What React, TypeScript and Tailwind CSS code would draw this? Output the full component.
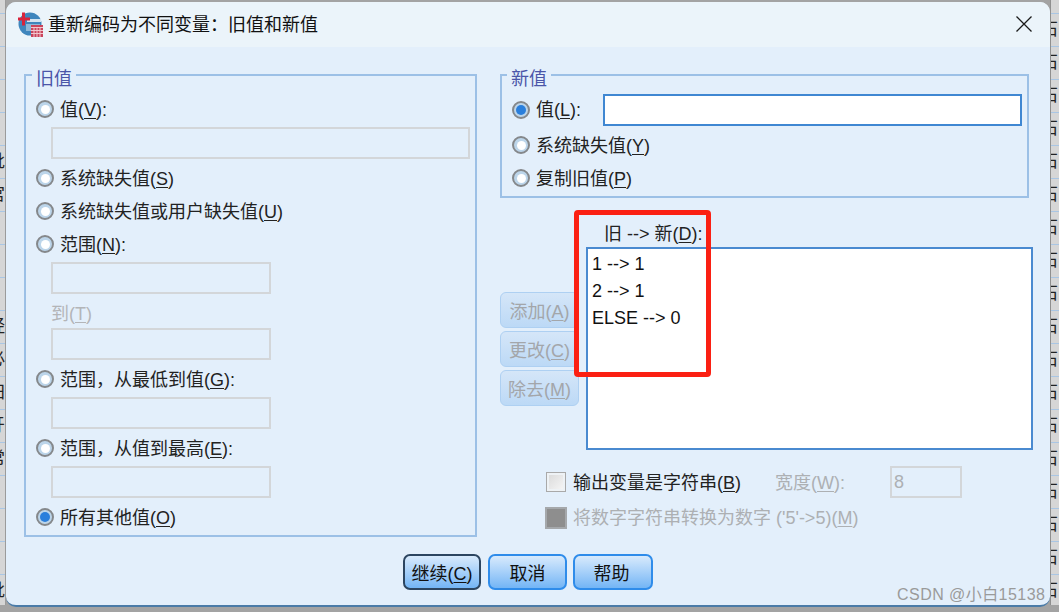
import React from "react";

const FONT = "font-['Liberation_Sans','Noto_Sans_CJK_SC',sans-serif]";
const COMMA = "\uFF0C";
const COLON = "\uFF1A";

function Mn({ children }: { children: React.ReactNode }) {
  return <span className="underline underline-offset-2 decoration-1">{children}</span>;
}

function Radio({ on = false }: { on?: boolean }) {
  return (
    <span className="w-[18px] h-[18px] shrink-0 rounded-full border-2 border-[#85888b] bg-[#bcd5ea] flex items-center justify-center">
      <span className={on ? "w-[10px] h-[10px] rounded-full bg-[#2a7fdc]" : "w-[9px] h-[9px] rounded-full bg-white"} />
    </span>
  );
}

function RadioRow({ on, children, className = "" }: { on?: boolean; children: React.ReactNode; className?: string }) {
  return (
    <div className={"h-6 flex items-center gap-[6px] text-[#222] " + className}>
      <Radio on={on} />
      <span className="h-6 pt-[1px] leading-6 whitespace-nowrap">{children}</span>
    </div>
  );
}

function Field({ wide = false, className = "" }: { wide?: boolean; className?: string }) {
  return <div className={(wide ? "w-[419px] " : "w-[220px] ") + "h-8 ml-[15px] border-2 border-[#d3d6d9] " + className} />;
}

function Legend({ children, left }: { children: React.ReactNode; left: string }) {
  return (
    <span className={"absolute top-[-7px] px-1 bg-[#e3effb] text-[#4a55a8] leading-5 " + left}>{children}</span>
  );
}

function SideBtn({ children }: { children: React.ReactNode }) {
  return (
    <div className="w-[79px] h-[36px] pt-[5px] rounded-[6px] border border-[#aed0f2] bg-gradient-to-b from-[#d5e6f8] to-[#bcd9f6] text-[#a3a6aa] flex items-center justify-center whitespace-nowrap">
      {children}
    </div>
  );
}

function MainBtn({ children, primary = false, w, extra = "" }: { children: React.ReactNode; primary?: boolean; w: string; extra?: string }) {
  return (
    <div
      className={
        w +
        " h-[36px] pt-[4px] rounded-[7px] border-2 bg-gradient-to-b from-[#d8eafc] to-[#73b5f5] text-[#111] flex items-center justify-center whitespace-nowrap " +
        (primary ? "border-[#2c4560] " : "border-[#2f8cea] ") +
        extra
      }
    >
      {children}
    </div>
  );
}

function Strip({ side, chars }: { side: "left" | "right"; chars: string[] }) {
  const isLeft = side === "left";
  return (
    <div
      className={
        (isLeft ? "w-[6px] border-r border-r-[#9b9b9b] " : "w-[9px] border-l border-l-[#8f8f8f] ") +
        "shrink-0 h-[605px] overflow-hidden flex flex-col bg-[#d6d6d6]"
      }
    >
      <div className="h-[14px] shrink-0 border-b border-[#a9c6e4]" />
      {chars.map((c, i) => (
        <div
          key={i}
          className={
            "h-[33px] shrink-0 border-b border-[#a9c6e4] flex items-center text-[17px] text-[#222] whitespace-nowrap " +
            (isLeft ? "justify-end" : "justify-start")
          }
        >
          <span className={isLeft ? "" : "ml-[-10px]"}>{c}</span>
        </div>
      ))}
    </div>
  );
}

function AppIcon() {
  return (
    <svg width="25" height="25" viewBox="0 0 25 25" className="shrink-0">
      <circle cx="12" cy="12" r="11.500" fill="#3f86bd" />
      <path d="M9 7h14v3H9z" fill="#d3e4f1" />
      <path d="M8 12h14v7H8z" fill="#8db8d8" />
      <path d="M4 0.500h3v5h5v3H7v5H4V8.500H0v-3h4z" fill="#d8243c" />
      <rect x="13" y="13" width="12" height="12" fill="#c9455c" />
      <path d="M13 15.500h12M13 18.500h12M13 21.500h12M16 15v10M19 15v10M22 15v10" stroke="#f2c6cd" strokeWidth="1" />
    </svg>
  );
}

export default function App() {
  const left = ["", "", "", "", "枇", "宫", "", "", "", "经", "必", "田", "牙", "常", "", "", "", "批"];
  const right = Array.from({ length: 18 }, () => "石");
  return (
    <div className={"w-[1059px] h-[612px] overflow-hidden relative flex items-start bg-[#a3a3a3] text-[18px] " + FONT}>
      <Strip side="left" chars={left} />

      <div className="w-[1044px] h-[605px] mt-[2px] shrink-0 rounded-t-[10px] rounded-b-[10px] border-b-[2px] border-b-[#4a7ba8] bg-[#e3effb] flex flex-col overflow-hidden">
        {/* title bar */}
        <div className="h-[45px] shrink-0 bg-[#ebf4fa] flex items-center pl-3 pr-[18px] gap-[5px]">
          <AppIcon />
          <span className="text-[#111] leading-6">重新编码为不同变量{COLON}旧值和新值</span>
          <svg width="16" height="16" viewBox="0 0 16 16" className="ml-auto mt-[-1px]">
            <path d="M.5.5l15 15M15.500.5l-15 15" stroke="#1a1a1a" strokeWidth="1.300" fill="none" />
          </svg>
        </div>

        {/* main */}
        <div className="flex pl-[18px] pt-[27px] gap-[23px] items-start">
          {/* old value */}
          <div className="relative w-[453px] h-[463px] shrink-0 border-2 border-[#9cc0e6] pl-[10px] pt-[21px] flex flex-col items-start">
            <Legend left="left-[6px]">旧值</Legend>
            <RadioRow>值(<Mn>V</Mn>):</RadioRow>
            <Field wide className="mt-[6px]" />
            <RadioRow className="mt-[7px]">系统缺失值(<Mn>S</Mn>)</RadioRow>
            <RadioRow className="mt-[9px]">系统缺失值或用户缺失值(<Mn>U</Mn>)</RadioRow>
            <RadioRow className="mt-[9px]">范围(<Mn>N</Mn>):</RadioRow>
            <Field className="mt-[6px]" />
            <div className="h-6 mt-[7px] pt-[1px] ml-[15px] leading-6 text-[#b3b5b8]">到(<Mn>T</Mn>)</div>
            <Field className="mt-[3px]" />
            <RadioRow className="mt-[7px]">范围{COMMA}从最低到值(<Mn>G</Mn>):</RadioRow>
            <Field className="mt-[6px]" />
            <RadioRow className="mt-[7px]">范围{COMMA}从值到最高(<Mn>E</Mn>):</RadioRow>
            <Field className="mt-[6px]" />
            <RadioRow on className="mt-[7px]">所有其他值(<Mn>O</Mn>)</RadioRow>
          </div>

          {/* right column */}
          <div className="relative w-[533px] shrink-0 flex flex-col items-start">
            <div className="relative w-[529px] h-[124px] border-2 border-[#9cc0e6] pl-[10px] pr-[5px] pt-[18px]">
              <Legend left="left-[5px]">新值</Legend>
              <div className="h-8 flex items-center justify-between">
                <div className="flex items-center gap-[6px] text-[#222]">
                  <Radio on />
                  <span className="pt-[1px] whitespace-nowrap">值(<Mn>L</Mn>):</span>
                </div>
                <div className="w-[419px] h-8 bg-white border-2 border-[#3f87d2]" />
              </div>
              <RadioRow className="mt-[7px]">系统缺失值(<Mn>Y</Mn>)</RadioRow>
              <RadioRow className="mt-[9px]">复制旧值(<Mn>P</Mn>)</RadioRow>
            </div>

            <div className="h-6 mt-[23px] pt-[1px] ml-[104px] leading-6 text-[#222] whitespace-nowrap">
              旧 --&gt; 新(<Mn>D</Mn>):
            </div>

            <div className="flex items-start gap-[7px] mt-[2px]">
              <div className="w-[79px] mt-[45px] flex flex-col gap-[3px]">
                <SideBtn>添加(<Mn>A</Mn>)</SideBtn>
                <SideBtn>更改(<Mn>C</Mn>)</SideBtn>
                <SideBtn>除去(<Mn>M</Mn>)</SideBtn>
              </div>
              <div className="w-[447px] h-[203px] bg-white border-2 border-[#4a8ad0] pl-1 pt-[2px] text-[#111] leading-[27px]">
                <div>1 --&gt; 1</div>
                <div>2 --&gt; 1</div>
                <div>ELSE --&gt; 0</div>
              </div>
            </div>

            <div className="flex items-center h-8 mt-4 ml-[47px]">
              <span className="w-[18px] h-[18px] border-2 border-[#eef2f5] outline outline-1 outline-[#a9a9a9] bg-gradient-to-br from-[#dcdcdc] to-[#f4f4f4] shrink-0" />
              <span className="ml-[8px] w-[202px] pt-[2px] text-[#222] whitespace-nowrap">输出变量是字符串(<Mn>B</Mn>)</span>
              <span className="w-[115px] pt-[2px] text-[#adb0b3] whitespace-nowrap">宽度(<Mn>W</Mn>):</span>
              <div className="w-[72px] h-8 border-2 border-[#d3d6d9] pl-[2px] leading-7 text-[#adb0b3]">8</div>
            </div>
            <div className="flex items-center h-6 mt-2 ml-[45px]">
              <span className="w-[22px] h-[22px] border-2 border-[#a5a8ab] bg-[#8e8e8e] shrink-0" />
              <span className="ml-[6px] pt-[1px] text-[#adb0b3] whitespace-nowrap">将数字字符串转换为数字 ('5'-&gt;5)(<Mn>M</Mn>)</span>
            </div>

            {/* annotation */}
            <div className="absolute left-[74px] top-[136px] w-[137px] h-[167px] border-[5px] border-[#fb2013] rounded-[4px]" />
          </div>
        </div>

        {/* bottom buttons */}
        <div className="flex justify-center gap-[6px] mt-[17px]">
          <MainBtn primary w="w-[78px]" extra="mr-[1px]">继续(<Mn>C</Mn>)</MainBtn>
          <MainBtn w="w-[79px]">取消</MainBtn>
          <MainBtn w="w-[80px]" extra="pr-[3px]">帮助</MainBtn>
        </div>
      </div>

      <Strip side="right" chars={right} />

      <div className="absolute left-[897px] top-[585px] text-[16px] tracking-[0.45px] leading-5 text-[#9a9a9a] whitespace-nowrap">
        CSDN @小白15138
      </div>
    </div>
  );
}
